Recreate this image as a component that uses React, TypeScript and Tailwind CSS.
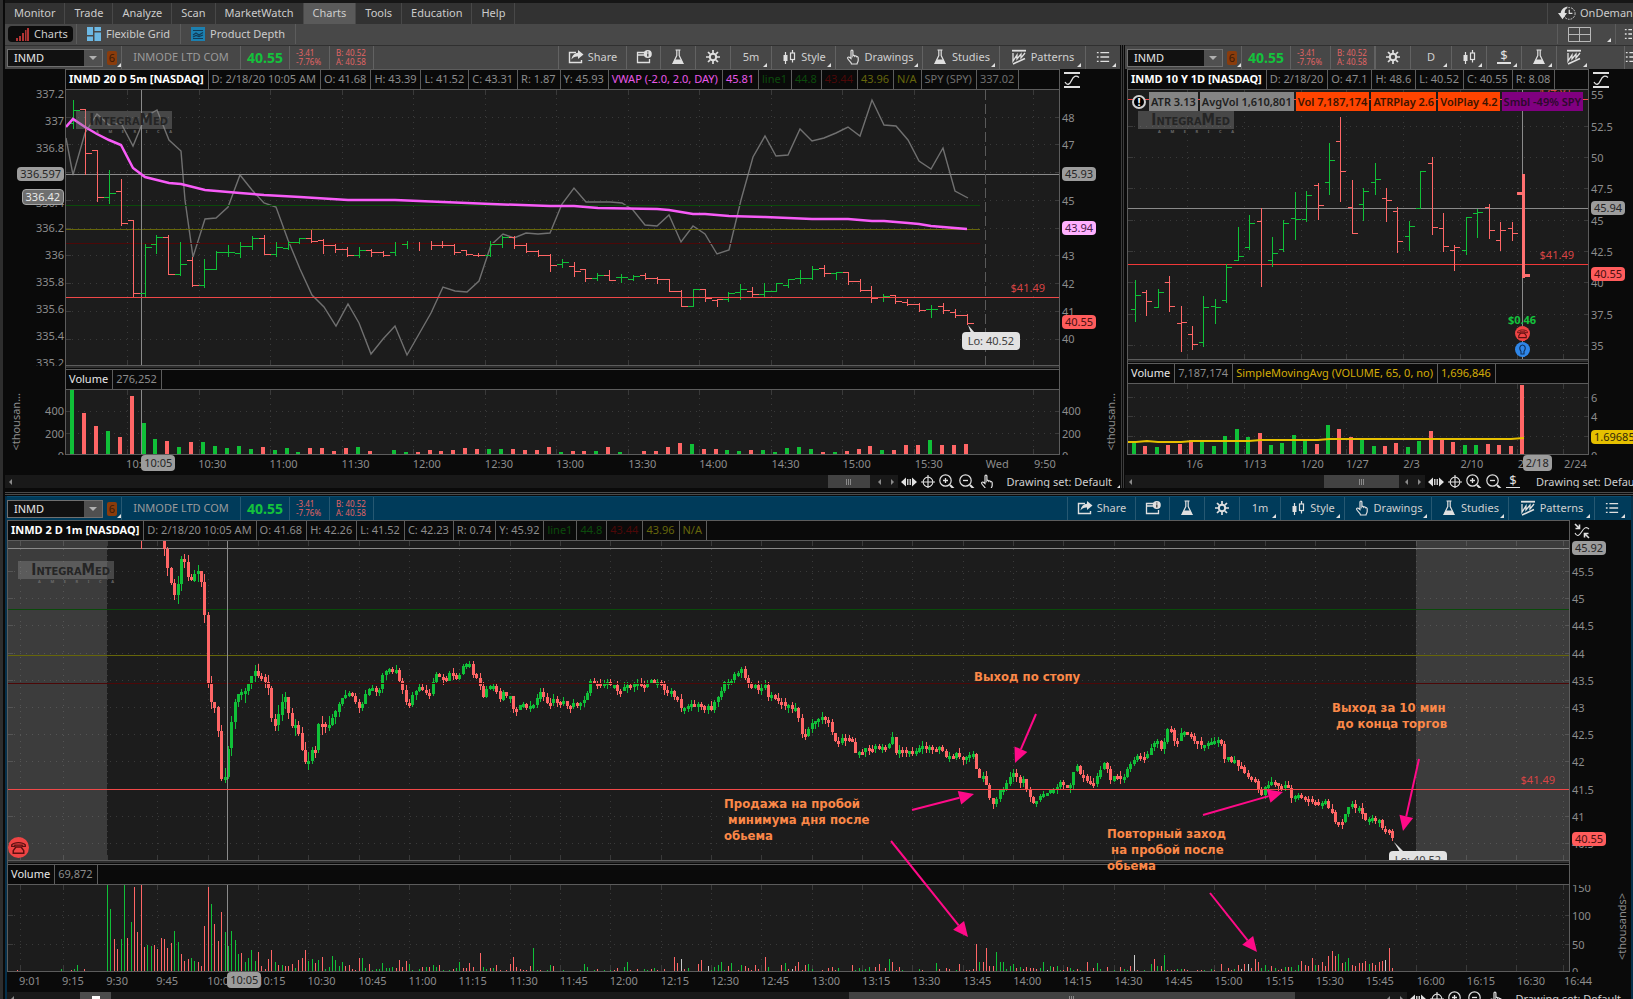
import type { ReactNode } from 'react';
import clsx from 'clsx';

type Tone = 'plain' | 'gray' | 'silver' | 'pink' | 'red' | 'yellow';
type Label = { at: number; text: string; tone?: Tone };
// [direction, high, low, open, close] in plot units; 0 hides the tick
type Bar = ['g' | 'r', number, number, number, number];
type Box = { x: number; y: number; w: number; h: number };

const GREEN = '#10c038';
const RED = '#ff6666';
const COLORS: Record<string, string> = { g: GREEN, r: RED, w: '#c8c8c8' };

/* ---------- data ---------- */

const INTRADAY: Bar[] = [
  ['g', 100, 128, 123, 110], ['r', 109, 174, 109, 153], ['r', 150, 201, 150, 197], ['g', 170, 203, 197, 193],
  ['r', 179, 225, 191, 223], ['r', 220, 297, 220, 293], ['g', 244, 297, 293, 247], ['g', 235, 253, 244, 237],
  ['r', 235, 274, 237, 274], ['g', 242, 275, 274, 264], ['r', 257, 286, 260, 285], ['g', 259, 287, 285, 269],
  ['g', 251, 269, 269, 252], ['g', 245, 256, 252, 252], ['g', 242, 257, 253, 246], ['g', 236, 249, 246, 238],
  ['r', 235, 254, 238, 254], ['g', 242, 256, 254, 247], ['g', 242, 249, 248, 242], ['g', 238, 243, 242, 238],
  ['r', 230, 242, 238, 241], ['r', 239, 253, 240, 245], ['r', 244, 252, 245, 249], ['r', 247, 256, 249, 255],
  ['g', 247, 257, 255, 250], ['r', 249, 256, 250, 252], ['r', 251, 256, 252, 255], ['g', 242, 255, 252, 0],
  ['g', 241, 248, 244, 0], ['r', 242, 250, 0, 0], ['r', 241, 249, 0, 245], ['r', 241, 247, 245, 245],
  ['r', 244, 254, 245, 252], ['r', 250, 255, 250, 254], ['r', 253, 256, 255, 255], ['g', 241, 256, 255, 244],
  ['g', 236, 247, 244, 237], ['r', 236, 248, 237, 245], ['r', 243, 252, 245, 251], ['r', 250, 256, 251, 255],
  ['r', 254, 271, 255, 265], ['g', 259, 267, 264, 262], ['r', 262, 276, 266, 271], ['r', 269, 281, 269, 278],
  ['g', 273, 280, 278, 275], ['r', 270, 280, 275, 280], ['g', 274, 282, 277, 277], ['g', 275, 280, 279, 276],
  ['r', 273, 279, 275, 278], ['r', 277, 283, 278, 279], ['r', 279, 291, 279, 291], ['r', 290, 306, 291, 306],
  ['g', 289, 306, 306, 289], ['r', 289, 301, 289, 298], ['r', 299, 306, 300, 299], ['g', 292, 301, 299, 293],
  ['g', 284, 299, 292, 289], ['r', 287, 297, 291, 294], ['g', 283, 296, 294, 291], ['g', 283, 291, 291, 283],
  ['g', 279, 287, 285, 279], ['g', 270, 283, 278, 278], ['g', 266, 279, 278, 269], ['r', 265, 276, 268, 273],
  ['g', 272, 279, 273, 272], ['r', 272, 284, 272, 281], ['r', 279, 291, 281, 290], ['r', 286, 302, 290, 298],
  ['g', 294, 301, 297, 296], ['r', 295, 303, 295, 301], ['r', 299, 305, 302, 304], ['r', 303, 311, 304, 310],
  ['g', 305, 317, 309, 309], ['r', 303, 313, 306, 310], ['r', 309, 317, 312, 315], ['r', 314, 324, 315, 323],
];

const INTRADAY_VOLUME = [
  64, 41, 28, 23, 17, 58, 31, 15, 13, 7, 12, 12, 8, 6, 8, 5, 7, 4, 6, 2, 6, 6, 3, 6, 7, 3, 0, 4, 2, 2, 4, 3, 4, 6, 5, 5, 5, 5,
  4, 4, 7, 2, 3, 3, 3, 7, 2, 0, 3, 3, 7, 11, 10, 5, 5, 4, 3, 4, 4, 2, 6, 7, 5, 2, 2, 3, 5, 8, 4, 4, 9, 9, 14, 9, 9, 10,
];

const SPY_LINE =
  '66,138 73,175 85,133 97,114 109,125 121,123 133,146 145,117 157,110 169,140 181,151 185,200 193,257 205,219 216,218 228,207 240,175 252,190 264,203 276,207 288,240 300,269 312,295 324,307 336,326 348,304 359,323 371,354 383,339 395,326 407,355 419,334 431,313 443,287 455,291 467,292 479,281 491,245 503,234 514,238 526,233 538,234 550,233 562,204 574,188 586,202 610,202 622,203 633,210 645,225 657,226 669,215 681,242 693,226 705,234 717,254 729,250 741,200 753,157 765,136 776,156 788,155 800,129 812,141 824,138 836,133 848,127 860,136 872,100 884,125 896,126 908,140 919,161 931,169 943,148 955,191 968,198';

const VWAP_LINE =
  '66,127 73,119 85,127 97,134 109,140 121,145 133,168 145,177 157,180 169,183 181,184 205,190 240,193 264,195 300,197 348,200 395,200 443,202 491,204 550,206 574,206 598,208 657,209 669,210 693,214 705,214 729,216 765,217 812,219 848,219 872,221 884,221 908,223 919,224 931,226 943,227 967,229';

const DAILY: Bar[] = [
  ['g', 280, 321, 309, 295], ['r', 290, 315, 292, 301], ['g', 289, 307, 307, 292], ['r', 276, 311, 282, 306],
  ['r', 306, 351, 323, 322], ['r', 326, 349, 334, 344], ['g', 296, 346, 342, 307], ['g', 299, 323, 306, 307],
  ['g', 264, 302, 300, 267], ['g', 227, 260, 260, 256], ['g', 215, 249, 247, 223], ['r', 208, 286, 221, 0],
  ['g', 237, 266, 260, 253], ['g', 220, 251, 249, 223], ['g', 192, 239, 218, 219], ['g', 191, 221, 219, 195],
  ['r', 183, 219, 185, 205], ['g', 143, 194, 182, 160], ['r', 117, 201, 141, 171], ['r', 180, 233, 207, 233],
  ['g', 188, 220, 204, 191], ['g', 163, 194, 182, 179], ['r', 188, 221, 198, 200], ['r', 207, 252, 211, 241],
  ['g', 221, 250, 236, 226], ['g', 171, 208, 208, 171], ['r', 157, 234, 163, 227], ['r', 213, 251, 228, 246],
  ['r', 245, 270, 250, 247], ['g', 217, 254, 250, 217], ['g', 209, 237, 213, 212], ['r', 204, 238, 207, 230],
  ['r', 222, 250, 240, 230], ['r', 222, 240, 228, 233], ['r', 174, 277, 193, 275],
];

const DAILY_VOLUME = [
  13, 8, 7, 9, 10, 14, 14, 8, 18, 25, 17, 21, 9, 11, 19, 13, 10, 29, 25, 17, 14, 8, 8, 11, 7, 13, 23, 14, 12, 9, 9, 10, 9, 8, 69,
];

// closes of the one-minute chart, linearly filled in between
const MINUTE_PATH =
  '160,535 162,541 165,553 168,570 172,590 176,596 179,572 182,550 186,572 189,586 193,577 196,570 199,577 203,591 206,643 209,708 212,697 216,716 219,742 221,781 224,785 226,752 229,742 232,712 236,697 239,690 243,692 246,685 250,683 253,671 256,669 259,676 263,680 266,683 270,697 273,745 276,715 279,717 283,690 286,700 290,724 293,724 296,725 299,738 302,753 306,768 309,762 313,748 316,748 320,713 323,735 326,726 330,723 333,717 337,708 340,702 344,695 350,695 354,702 359,708 363,706 366,690 371,691 379,690 383,675 386,672 396,670 401,690 404,691 407,707 410,702 414,694 420,684 424,691 430,691 434,680 437,675 443,680 449,675 457,679 461,668 464,667 468,660 471,665 475,680 479,680 481,700 484,700 488,686 495,686 498,699 504,691 509,695 513,707 534,707 536,696 541,692 545,701 557,702 561,702 570,705 577,705 585,697 589,684 594,681 611,683 617,694 624,687 628,681 640,686 649,682 663,685 665,693 670,690 677,700 679,707 690,704 704,707 712,707 717,697 723,685 729,684 733,673 739,673 743,670 746,685 754,688 766,686 767,695 774,698 783,705 795,707 799,722 802,733 807,732 810,725 815,723 820,714 824,718 828,723 832,730 835,743 840,740 844,737 851,740 854,752 863,752 872,747 888,747 892,737 894,754 901,750 913,752 919,748 940,747 947,757 954,757 958,754 974,756 977,777 985,780 988,792 995,806 997,795 1004,790 1006,783 1010,775 1015,772 1018,787 1022,777 1027,792 1033,803 1037,798 1047,794 1058,788 1061,780 1068,789 1072,782 1075,763 1079,773 1085,777 1092,784 1096,785 1098,767 1105,766 1110,778 1124,777 1129,763 1133,763 1138,756 1147,755 1151,746 1158,741 1162,752 1165,732 1170,731 1176,742 1182,728 1186,730 1193,740 1202,745 1214,739 1221,742 1223,755 1226,757 1235,761 1240,765 1246,773 1253,780 1258,787 1261,796 1264,787 1270,784 1288,786 1290,799 1302,794 1309,802 1327,804 1331,813 1337,826 1343,818 1348,804 1359,807 1362,815 1368,820 1376,818 1381,823 1384,833 1388,833 1392,840 1394,842';

// minute after the open, direction, bar height
const MINUTE_VOLUME =
  '0g86 1g62 2r32 3r22 4g32 5g86 6r33 7g49 8r84 9r39 10r86 11r24 12g26 13g25 14r26 15r22 16r33 17r32 18r23 19r28 20g40 21g29 22r17 23r10 24r12 25g13 26g10 27r9 28r5 29r45 30r84 31g67 32r47 33r30 34r59 35g39 36g25 37g40 38g31 39g17 40r18 41g9 42g13 43g21 44g10 45r19 46r5 47r2 48r12 49r21 50g9 51r6 52g6 53r5 54r5 55r7 56g3 57r11 58r13 59r21 60g10 61g12 62r8 63g11 64r14 65g2 66g4 67g15 68g11 69g5 70g9 71r5 72r6 73r2 74r1 75r13 76g13 77g3 78r7 79g1 80g2 81g2 82g8 83g3 84g3 85g4 86r3 87r11 88r4 89r10 90g7 91g1 93g2 94r4 95g4 96r4 97g6 98g4 99r6 100g1 102g1 103r2 104g3 105g9 106r3 107r3 108r8 109r4 111r18 112g4 113g2 114r3 115g3 116r6 117r1 119r1 120r7 121r14 122r4 123r2 124r1 125r1 126r5 127g23 128g1 129r1 131g1 132g6 133r5 136g1 141g1 142g7 143g4 145g1 146r2 148g1 150g1 151r1 152r3 154g4 155g9 156r1 158r2 160g2 161g1 162r2 163g3 164r1 166r2 169r14 170r8 171w12 172r2 173g3 176r7 177r11 179w5 180g1 181g4 182g6 183g9 184g1 185r5 186g8 188r1 189g6 190r5 191r3 192r1 193r6 194r2 196r14 197g4 201r6 202g8 203r2 204w2 205r5 206r9 207r1 208r6 209g7 210g2 213r1 215r3 216r4 217r1 218g3 222r6 223g1 224g3 225g1 226g2 227g4 229r4 230r7 232r3 233g12 234r9 235r1 236r4 237g1 242g2 243r1 247g8 248r2 250r3 251r2 253g1 254r7 256r1 257r1 258r2 259r27 260g9 261r9 262r23 263r5 264r5 265g19 266g9 267g9 268g2 269g5 270g7 271r3 272g4 273r2 274r4 275r3 276r3 277r2 278g3 279g9 280w1 281g5 282r4 283g5 284g1 285r1 286r4 287g3 288g1 289r2 290g1 292r9 294r3 295g8 296g2 298r4 300g1 302r4 303g2 304g1 305r5 306w16 307r1 309g1 311g7 312r12 313g5 314r5 315g16 316r1 317r1 318r1 319g2 320g2 321r2 322r1 325r1 326r1 327g1 329g2 330r1 332r7 334r3 335r1 336g2 337r6 338w2 339r7 340w7 341r3 342r12 343r9 344g3 345g6 346g1 347r5 348g3 349r1 350r2 351g4 352r4 353g4 354g1 355g6 356r10 357r6 358r5 359r13 360g6 361r6 362r9 363r5 364r15 365r20 366r15 367g17 368r8 369g9 370g13 371r6 372r5 373r8 374r8 375r10 376g7 377r8 378r6 379r9 380r10 381w11 382r23 383r3';

const MINUTE_OPEN_X = 107.1;
const MINUTE_STEP = 3.355;

const minuteX = (m: number) => Math.round(MINUTE_OPEN_X + MINUTE_STEP * m);

function noise(n: number) {
  const v = Math.sin(n * 12.9898) * 43758.5453;
  return v - Math.floor(v);
}

function buildCandles() {
  const pts = MINUTE_PATH.split(' ').map((p) => p.split(',').map(Number));
  const at = (x: number) => {
    const i = Math.max(1, pts.findIndex((p) => p[0] >= x));
    const [x0, y0] = pts[i - 1];
    const [x1, y1] = pts[i];
    return y0 + ((y1 - y0) * (x - x0)) / (x1 - x0);
  };
  const out: { x: number; top: number; h: number; hi: number; lo: number; color: string }[] = [];
  let prev = 538;
  for (let m = 17; m <= 383; m++) {
    const x = Math.min(1394, MINUTE_OPEN_X + MINUTE_STEP * m);
    const y = at(x) + (noise(m) - 0.5) * 6;
    const h = Math.max(3, Math.round(Math.abs(prev - y)));
    // the morning session swings wider than the rest of the day
    const wick = m < 70 ? 9 : 5;
    out.push({
      x: minuteX(m),
      top: Math.round(Math.min(prev, y)),
      h,
      hi: Math.round(noise(m + 500) * wick),
      lo: Math.round(noise(m + 900) * wick),
      color: y > prev ? RED : GREEN,
    });
    prev = y;
  }
  return out;
}

const CANDLES = buildCandles();

/* ---------- icons ---------- */

const iconProps = { viewBox: '0 0 16 16', fill: 'none', stroke: '#e0e0e0', 'aria-hidden': true } as const;

const ShareIcon = () => (
  <svg {...iconProps} className="w-4 h-4">
    <path d="M8 3.5H1.5v10h12V11" strokeWidth="1.4" />
    <path d="M10 1l5.5 4.5L10 10V7.5C7 7.2 5 8.5 3.5 10.5 4 6.5 6.5 4 10 3.7z" fill="#e0e0e0" stroke="none" />
  </svg>
);
const NewsIcon = () => (
  <svg {...iconProps} className="w-4 h-4">
    <path d="M9 3.5H1.5v10h12V10M1.5 6H9" strokeWidth="1.3" />
    <circle cx="11.8" cy="5" r="4" fill="#e0e0e0" stroke="none" />
    <path d="M11.8 4.5V7.5M11.8 2.5V3.6" stroke="#444" strokeWidth="1.4" />
  </svg>
);
const FlaskIcon = () => (
  <svg {...iconProps} className="w-4 h-4">
    <path d="M5.5 1h5M6.8 1v5.5L3 14.5h10L9.2 6.5V1" strokeWidth="1.2" />
    <path d="M4.8 10.5h6.4l2.3 4.5h-11z" fill="#e0e0e0" stroke="none" />
  </svg>
);
const GearIcon = () => (
  <svg {...iconProps} className="w-4 h-4">
    <circle cx="8" cy="8" r="3.2" strokeWidth="2" />
    <path d="M8 1v3M8 12v3M1 8h3M12 8h3M3 3l2.2 2.2M10.8 10.8L13 13M3 13l2.2-2.2M10.8 5.2L13 3" strokeWidth="1.7" />
  </svg>
);
const CandlesIcon = () => (
  <svg {...iconProps} className="w-4 h-4">
    <path d="M4.5 3v12M11.5 1v3M11.5 10.5v3" strokeWidth="1.2" />
    <rect x="2.5" y="6" width="4" height="6" fill="#e0e0e0" stroke="none" />
    <rect x="9.5" y="4" width="4" height="6.5" strokeWidth="1.2" />
  </svg>
);
const HandIcon = () => (
  <svg {...iconProps} className="w-4 h-4">
    <path
      d="M6 9.5V2c0-1.3 1.9-1.3 1.9 0v4.8c.5-.8 1.7-.5 1.8.4.6-.6 1.6-.3 1.8.5.7-.4 1.7 0 1.7 1v2.5c0 1.8-1.2 2.5-1.2 3.8H6.5C6.5 13 3 11.5 2.5 9c.2-1.3 1.8-1.2 2.3-.4z"
      strokeWidth="1.2"
    />
  </svg>
);
const PatternIcon = () => (
  <svg {...iconProps} className="w-4 h-4">
    <path d="M1 1.7h14" strokeWidth="1.8" />
    <path d="M2 4v8l4-6v4l4-5v4l4-5" strokeWidth="1.3" />
    <path d="M2 15L14 9.5" strokeWidth="1.6" />
  </svg>
);
const ListIcon = () => (
  <svg {...iconProps} className="w-3.5 h-3.5">
    <path d="M1 3h2M1 8h2M1 13h2M5 3h10M5 8h10M5 13h10" strokeWidth="1.5" />
  </svg>
);
const DollarIcon = () => (
  <span className="flex flex-col items-center w-3.5 border-b-2 border-[#e0e0e0] text-[13px] leading-[13px] text-[#e0e0e0]">$</span>
);
const CurveIcon = () => (
  <svg {...iconProps} className="w-4 h-4">
    <path d="M0 1h16M0 15h16" strokeWidth="1.8" />
    <path d="M1 10c2 3.5 4.5 3 6.5-1.5S12 3 15 5.5" strokeWidth="1.3" />
  </svg>
);
const CurveArrowsIcon = () => (
  <svg {...iconProps} className="w-4 h-4">
    <path d="M1 10c2 4 4 3 6.5-1S12 3 15 6" strokeWidth="1.1" />
    <path d="M1 1l4 4M5.5 1.5V5.5H1.5M15 15l-4-4M10.5 14.5V10.5H14.5" strokeWidth="1.6" />
  </svg>
);
const PanIcon = () => (
  <svg {...iconProps} className="w-4 h-4">
    <path d="M5 3.5v9L0 8zM11 3.5v9L16 8z" fill="#e0e0e0" stroke="none" />
    <path d="M6.5 5v6M8 5v6M9.5 5v6" strokeWidth=".9" />
  </svg>
);
const CrossIcon = () => (
  <svg {...iconProps} className="w-3.5 h-3.5">
    <circle cx="8" cy="8" r="5.5" strokeWidth="1.3" />
    <path d="M8 0v16M0 8h16" strokeWidth="1.3" />
  </svg>
);
const ZoomIcon = ({ plus }: { plus?: boolean }) => (
  <svg {...iconProps} className="w-4 h-4">
    <circle cx="6.5" cy="6.5" r="5.7" strokeWidth="1.2" />
    <path d="M11 11l4.5 4.5" strokeWidth="2" />
    <path d={plus ? 'M4 6.5h5M6.5 4v5' : 'M4 6.5h5'} strokeWidth="1.3" />
  </svg>
);
const PhoneIcon = ({ size }: { size: number }) => (
  <svg viewBox="0 0 20 20" width={size} height={size} aria-hidden>
    <circle cx="10" cy="10" r="10" fill="#ee4444" />
    <path d="M3.5 9V7.5C6 4.5 14 4.5 16.5 7.5V9h-3V7.8h-7V9z" fill="none" stroke="#5a1010" strokeWidth="1.2" />
    <path d="M7.5 9.5h5l2.5 3.5v2.5H5V13z" fill="none" stroke="#5a1010" strokeWidth="1.4" />
  </svg>
);
const BulbIcon = () => (
  <svg viewBox="0 0 20 20" width="15" height="15" aria-hidden>
    <circle cx="10" cy="10" r="10" fill="#2f86e8" />
    <path d="M8 12.5C5 9 6.5 4 10 4s5 5 2 8.5v3.5H8z" fill="none" stroke="#10305a" strokeWidth="1.5" />
  </svg>
);

/* ---------- toolbar ---------- */

const Corner = () => (
  <span className="absolute right-1 bottom-0.5 border-4 border-t-0 border-r-0 border-transparent border-b-[#e0e0e0]" />
);

function Tool({ label, title, width, corner, children }: { label?: string; title?: string; width: string; corner?: boolean; children?: ReactNode }) {
  return (
    <button
      type="button"
      aria-label={label ?? title}
      className={clsx('relative flex items-center justify-center gap-1 shrink-0 h-full border-l border-white/15 pb-0.5 text-[#d0d0d0]', width)}
    >
      {children}
      {label}
      {corner && <Corner />}
    </button>
  );
}

function SymbolBox({ id, name }: { id: string; name?: string }) {
  return (
    <>
      <div className="flex h-[18px] w-24 shrink-0 border border-[#707070] bg-[#111]">
        <label htmlFor={id} className="sr-only">Symbol</label>
        <input id={id} defaultValue="INMD" className="w-full min-w-0 bg-transparent px-1.5 text-[#e8e8e8] outline-none" />
        <button type="button" aria-label="Symbol list" className="flex w-[18px] shrink-0 items-center justify-center bg-[#505050]">
          <span className="border-x-4 border-t-4 border-x-transparent border-t-[#b0b0b0]" />
        </button>
      </div>
      <div className="relative flex h-full w-[18px] shrink-0 items-center justify-center">
        <span className="flex h-3.5 w-2.5 items-center justify-center rounded-[2px] bg-[#8a3c0c] text-[#3c1a06]">6</span>
        <span className="absolute right-0 bottom-0.5 border-4 border-transparent border-r-0 border-b-[#e0e0e0] border-t-0" />
      </div>
      {name && <span className="flex h-full w-[119px] shrink-0 items-center justify-center border-l border-white/15 pb-0.5 text-[#9a9a9a]">{name}</span>}
      <span className="flex h-full w-[49px] shrink-0 items-center justify-center border-l border-white/15 text-sm font-bold text-[#14c23c]">40.55</span>
      <span className="flex h-full w-10 shrink-0 flex-col justify-center border-l border-white/15 pb-0.5 pl-1.5 text-[8px] leading-[9px] text-[#e06464]">
        <span>-3.41</span>
        <span>-7.76%</span>
      </span>
      <span className="flex h-full w-[45px] shrink-0 flex-col justify-center border-x border-white/15 pb-0.5 pl-1.5 text-[8px] leading-[9px] text-[#e06464]">
        <span>B: 40.52</span>
        <span>A: 40.58</span>
      </span>
    </>
  );
}

function Toolbar({ id, period, active }: { id: string; period: string; active?: boolean }) {
  return (
    <div className={clsx('flex h-6 items-center overflow-hidden border-t', active ? 'border-[#0a4a6c] bg-[#003b5a] pr-[2px]' : 'border-[#303030] bg-[#474747] pl-[2px]')}>
      <SymbolBox id={id} name="INMODE LTD COM" />
      <div className="ml-auto flex h-full">
        <Tool label="Share" width="w-[68px]"><ShareIcon /></Tool>
        <Tool title="News" width="w-[34px]"><NewsIcon /></Tool>
        <Tool title="Edit studies" width="w-[35px]"><FlaskIcon /></Tool>
        <Tool title="Settings" width="w-[35px]"><GearIcon /></Tool>
        <Tool label={period} width="w-[41px]" corner />
        <Tool label="Style" width="w-[64px]" corner><CandlesIcon /></Tool>
        <Tool label="Drawings" width="w-[87px]" corner><HandIcon /></Tool>
        <Tool label="Studies" width="w-[77px]" corner><FlaskIcon /></Tool>
        <Tool label="Patterns" width="w-[86px]" corner><PatternIcon /></Tool>
        <Tool title="Menu" width="w-[35px]" corner><ListIcon /></Tool>
      </div>
    </div>
  );
}

/* ---------- chart parts ---------- */

type Chip = [string, string];

function StatusRow({ items }: { items: Chip[] }) {
  return (
    <div className="flex h-[21px] items-stretch overflow-hidden border-y border-[#5c5c5c] bg-[#0a0a0a]">
      {items.map(([text, tone], i) => (
        <span key={i} className={clsx('flex shrink-0 items-center border-r border-[#5c5c5c] pr-1 pb-0.5 pl-[3px] whitespace-nowrap', tone)}>
          {text}
        </span>
      ))}
    </div>
  );
}

const BADGES: Record<Tone, string> = {
  plain: 'text-[#8c8c8c]',
  gray: 'rounded bg-[#9c9c9c] px-[3px] text-[#262626]',
  silver: 'rounded border border-[#a8a8a8] bg-[#6e6e6e] px-[3px] text-[#e8e8e8]',
  pink: 'rounded bg-[#ffb0ff] px-[3px] text-[#4a204a]',
  red: 'rounded bg-[#ff5c5c] px-[3px] text-[#4a1010]',
  yellow: 'rounded bg-[#e6c000] px-[3px] text-[#33290a]',
};

// price scale beside a plot; `at` shares the plot's vertical units
function Scale({ labels, from, side, className }: { labels: Label[]; from: number; side: 'left' | 'right'; className: string }) {
  return (
    <div className={clsx('relative overflow-hidden', className)}>
      {labels.map((l) => (
        <span
          key={l.text}
          style={{ top: l.at - from - 7 }}
          className={clsx('absolute leading-[14px]', side === 'left' ? 'right-px' : 'left-0.5', BADGES[l.tone ?? 'plain'])}
        >
          {l.text}
        </span>
      ))}
    </div>
  );
}

function TimeAxis({ labels, box, hover }: { labels: Label[]; box: Box; hover: Label }) {
  const left = (x: number) => `${((x - box.x) / box.w) * 100}%`;
  return (
    <div className="relative h-5 text-[#8c8c8c]">
      {labels.map((l) => (
        <span key={l.text} style={{ left: left(l.at) }} className="absolute top-0.5 leading-[14px] whitespace-nowrap">
          {l.text}
        </span>
      ))}
      <span style={{ left: left(hover.at) }} className="absolute top-0 rounded bg-[#9c9c9c] px-[3px] leading-4 text-[#262626]">
        {hover.text}
      </span>
    </div>
  );
}

function Plot({ box, rows, cols, className, children, overlay }: { box: Box; rows: number[]; cols: number[]; className: string; children: ReactNode; overlay?: ReactNode }) {
  const bottom = box.y + box.h;
  const right = box.x + box.w;
  return (
    <div className={clsx('relative overflow-hidden border-b border-[#5c5c5c] bg-[#1c1c1c]', className)}>
      <svg
        viewBox={`${box.x} ${box.y} ${box.w} ${box.h}`}
        preserveAspectRatio="none"
        className="block h-full w-full"
        aria-hidden
      >
        <g stroke="#3a3a3a" shapeRendering="crispEdges">
          {rows.map((y) => (
            <g key={y}>
              <path d={`M${box.x} ${y + 0.5}H${right}`} strokeDasharray="1 5" />
              <path d={`M${box.x} ${y + 0.5}h5M${right} ${y + 0.5}h-4`} />
            </g>
          ))}
          {cols.map((x) => (
            <g key={x}>
              <path d={`M${x + 0.5} ${box.y + 8}V${bottom}`} strokeDasharray="1 5" />
              <path d={`M${x + 0.5} ${box.y}v5M${x + 0.5} ${bottom}v-5`} />
            </g>
          ))}
        </g>
        {children}
      </svg>
      {overlay}
    </div>
  );
}

const HLine = ({ y, color, from, to }: { y: number; color: string; from: number; to: number }) => (
  <path d={`M${from} ${y + 0.5}H${to}`} stroke={color} shapeRendering="crispEdges" />
);
const VLine = ({ x, from, to }: { x: number; from: number; to: number }) => (
  <path d={`M${x + 0.5} ${from}V${to}`} stroke="#8a8a8a" shapeRendering="crispEdges" />
);

function OhlcBars({ bars, start, step, tick }: { bars: Bar[]; start: number; step: number; tick: number }) {
  return (
    <g shapeRendering="crispEdges" fill="none">
      {bars.map(([dir, hi, lo, open, close], i) => {
        const x = Math.round(start + step * i) + 0.5;
        const d = `M${x} ${hi}V${lo + 1}${open ? `M${x - tick} ${open + 0.5}H${x}` : ''}${close ? `M${x} ${close + 0.5}H${x + tick}` : ''}`;
        return <path key={i} d={d} stroke={COLORS[dir]} />;
      })}
    </g>
  );
}

function VolumeBars({ bars, heights, start, step, base }: { bars: Bar[]; heights: number[]; start: number; step: number; base: number }) {
  return (
    <g shapeRendering="crispEdges">
      {heights.map((h, i) => (
        <rect key={i} x={Math.round(start + step * i) - 2} y={base - h} width="4" height={h} fill={COLORS[bars[i][0]]} />
      ))}
    </g>
  );
}

// faint company watermark in the corner of each price plot
const Watermark = ({ className }: { className: string }) => (
  <div className={clsx('absolute', className)}>
    <div className="flex h-[18px] w-24 items-center justify-end bg-[#8a8a8a]/40 pr-1 font-['Liberation_Sans_Narrow','DejaVu_Sans_Condensed',sans-serif] text-[15px] leading-[18px] font-bold text-[#252525] [font-variant:small-caps]">
      IntegraMed
    </div>
    <div className="flex justify-between pl-5 text-[4px] leading-[6px] font-bold text-[#6a6a6a]">
      {'AMERICA'.split('').map((c, i) => <span key={i}>{c}</span>)}
    </div>
  </div>
);

const LowBubble = ({ className }: { className: string }) => (
  <span className={clsx('absolute rounded bg-[#e2e2e2] px-1.5 leading-[18px] whitespace-nowrap text-[#404040]', className)}>Lo: 40.52</span>
);

const Units = ({ className, text }: { className: string; text: string }) => (
  <span className={clsx('absolute rotate-180 whitespace-nowrap text-[#8c8c8c] [writing-mode:vertical-rl]', className)}>{text}</span>
);

function ScrollRow({ grow, thumb, rest, gap, money, end }: { grow: string; thumb: string; rest: string; gap?: ReactNode; money?: boolean; end?: string }) {
  return (
    <div className={clsx('flex h-[13px] items-center', end)}>
      <div className={clsx('flex h-[13px] items-center bg-[#191919]', grow)}>
        <span className="ml-1 border-[3px] border-l-0 border-transparent border-r-[#8a8a8a]" />
        {gap}
      </div>
      <div className={clsx('flex h-[13px] shrink-0 items-center justify-center gap-px bg-[#424242]', thumb)}>
        <span className="h-1.5 w-px bg-[#8a8a8a]" />
        <span className="h-1.5 w-px bg-[#8a8a8a]" />
        <span className="h-1.5 w-px bg-[#8a8a8a]" />
      </div>
      <div className={clsx('flex h-[13px] shrink-0 items-center justify-end gap-2.5 bg-[#191919] pr-1', rest)}>
        <span className="border-[3px] border-l-0 border-transparent border-r-[#8a8a8a]" />
        <span className="border-[3px] border-r-0 border-transparent border-l-[#8a8a8a]" />
      </div>
      <div className="flex shrink-0 items-center gap-1 pl-[3px]">
        <button type="button" aria-label="Pan"><PanIcon /></button>
        <button type="button" aria-label="Crosshair"><CrossIcon /></button>
        <button type="button" aria-label="Zoom in"><ZoomIcon plus /></button>
        <button type="button" aria-label="Zoom out"><ZoomIcon /></button>
        <button type="button" aria-label="Drawing tool">{money ? <DollarIcon /> : <HandIcon />}</button>
      </div>
      <button type="button" className={clsx('relative shrink-0 pr-2 whitespace-nowrap text-[#d0d0d0]', money ? 'ml-4' : 'ml-3')}>
        Drawing set: Default
        <span className="absolute right-0 bottom-0 border-4 border-r-0 border-t-0 border-transparent border-b-[#e0e0e0]" />
      </button>
    </div>
  );
}

const GRAY = 'text-[#8c8c8c]';
const TITLE = 'font-bold text-white';
const MAGENTA = 'text-[#e858e8]';
const LEVELS: Chip[] = [
  ['line1', 'text-[#0c4a0c]'],
  ['44.8', 'text-[#0c4a0c]'],
  ['43.44', 'text-[#4c0808]'],
  ['43.96', 'text-[#66660c]'],
  ['N/A', 'text-[#66660c]'],
];

/* ---------- 5 minute chart ---------- */

const P1: Box = { x: 66, y: 90, w: 993, h: 275 };
const V1: Box = { x: 66, y: 390, w: 993, h: 64 };
const P1_COLS = [127, 199, 270, 342, 413, 485, 556, 628, 699, 771, 842, 914, 1033];

function IntradayPanel() {
  return (
    <section className="min-w-0 overflow-hidden bg-[#0a0a0a]">
      <Toolbar id="symbol-5m" period="5m" />
      <div className="flex">
        <div className="relative w-[60px] shrink-0 pt-[21px]">
          <Scale
            side="left"
            from={90}
            className="h-[276px]"
            labels={[
              { at: 94, text: '337.2' },
              { at: 121, text: '337' },
              { at: 148, text: '336.8' },
              { at: 203, text: '336.4' },
              { at: 174, text: '336.597', tone: 'gray' },
              { at: 196, text: '336.42', tone: 'silver' },
              { at: 228, text: '336.2' },
              { at: 255, text: '336' },
              { at: 282, text: '335.8' },
              { at: 309, text: '335.6' },
              { at: 336, text: '335.4' },
              { at: 363, text: '335.2' },
            ]}
          />
          <Scale side="left" from={390} className="mt-6 h-[65px]" labels={[{ at: 411, text: '400' }, { at: 434, text: '200' }, { at: 456, text: '0' }]} />
          <Units className="bottom-6 left-1" text="<thousan..." />
        </div>
        <div className="min-w-0 flex-1">
          <div className="border-x border-[#5c5c5c]">
            <StatusRow
              items={[
                ['INMD 20 D 5m [NASDAQ]', TITLE],
                ['D: 2/18/20 10:05 AM', GRAY],
                ['O: 41.68', GRAY],
                ['H: 43.39', GRAY],
                ['L: 41.52', GRAY],
                ['C: 43.31', GRAY],
                ['R: 1.87', GRAY],
                ['Y: 45.93', GRAY],
                ['VWAP (-2.0, 2.0, DAY)', MAGENTA],
                ['45.81', MAGENTA],
                ...LEVELS,
                ['SPY (SPY)', 'text-[#707070]'],
                ['337.02', 'text-[#707070]'],
              ]}
            />
            <Plot
              box={P1}
              className="h-[276px]"
              rows={[117, 144, 172, 200, 228, 255, 283, 311, 339]}
              cols={P1_COLS}
              overlay={
                <>
                  <Watermark className="top-[21px] left-2.5" />
                  <span className="absolute top-[191px] right-3.5 leading-[14px] text-[#d84444]">$41.49</span>
                  <LowBubble className="top-[242px] right-[39px]" />
                </>
              }
            >
              <polyline points={SPY_LINE} fill="none" stroke="#707070" strokeWidth="1.4" />
              <HLine y={205} color="#0a4a0a" from={66} to={980} />
              <HLine y={229} color="#66660a" from={66} to={980} />
              <HLine y={243} color="#4c0808" from={66} to={980} />
              <HLine y={174} color="#8a8a8a" from={66} to={1059} />
              <VLine x={141} from={90} to={365} />
              <path d="M985.5 90V365" stroke="#5a5a5a" strokeDasharray="10 4" shapeRendering="crispEdges" />
              <OhlcBars bars={INTRADAY} start={73} step={11.917} tick={6} />
              <HLine y={297} color="#f04848" from={66} to={1059} />
              <polyline points={VWAP_LINE} fill="none" stroke="#f85cf8" strokeWidth="2.5" />
              <path d="M968 325l3 8h4z" fill="#e2e2e2" />
            </Plot>
            <div className="h-[3px] border-b border-[#0a0a0a] bg-[#2c2c2c]" />
            <StatusRow items={[['Volume', 'text-[#e8e8e8]'], ['276,252', GRAY]]} />
            <Plot box={V1} className="h-[65px]" rows={[411, 433]} cols={P1_COLS}>
              <VLine x={141} from={390} to={454} />
              <VolumeBars bars={INTRADAY} heights={INTRADAY_VOLUME} start={72} step={11.917} base={454} />
            </Plot>
          </div>
          <TimeAxis
            box={V1}
            hover={{ at: 142, text: '10:05' }}
            labels={[
              { at: 127, text: '10:' },
              { at: 199, text: '10:30' },
              { at: 270, text: '11:00' },
              { at: 342, text: '11:30' },
              { at: 413, text: '12:00' },
              { at: 485, text: '12:30' },
              { at: 556, text: '13:00' },
              { at: 628, text: '13:30' },
              { at: 699, text: '14:00' },
              { at: 771, text: '14:30' },
              { at: 842, text: '15:00' },
              { at: 914, text: '15:30' },
              { at: 985, text: 'Wed' },
              { at: 1033, text: '9:50' },
            ]}
          />
        </div>
        <div className="relative w-[60px] shrink-0">
          <div className="flex h-[21px] items-center pl-1"><CurveIcon /></div>
          <Scale
            side="right"
            from={90}
            className="h-[276px]"
            labels={[
              { at: 118, text: '48' },
              { at: 145, text: '47' },
              { at: 174, text: '45.93', tone: 'gray' },
              { at: 201, text: '45' },
              { at: 228, text: '43.94', tone: 'pink' },
              { at: 256, text: '43' },
              { at: 284, text: '42' },
              { at: 312, text: '41' },
              { at: 322, text: '40.55', tone: 'red' },
              { at: 339, text: '40' },
            ]}
          />
          <Scale side="right" from={390} className="mt-6 h-[65px]" labels={[{ at: 411, text: '400' }, { at: 434, text: '200' }, { at: 456, text: '0' }]} />
          <Units className="right-0.5 bottom-6" text="<thousan..." />
        </div>
      </div>
      <ScrollRow grow="flex-1" thumb="w-[42px]" rest="w-7" />
    </section>
  );
}

/* ---------- daily chart ---------- */

const P2: Box = { x: 1128, y: 90, w: 460, h: 269 };
const V2: Box = { x: 1128, y: 384, w: 460, h: 70 };
const P2_COLS = [1187, 1244, 1301, 1346, 1403, 1460, 1517, 1563];

const METRICS: Chip[] = [
  ['ATR 3.13', 'bg-[#848484] text-[#202020]'],
  ['AvgVol 1,610,801', 'bg-[#848484] text-[#202020]'],
  ['Vol 7,187,174', 'bg-[#ff4400] text-[#3c1400]'],
  ['ATRPlay 2.6', 'bg-[#ff4400] text-[#3c1400]'],
  ['VolPlay 4.2', 'bg-[#ff4400] text-[#3c1400]'],
  ['Smbl -49% SPY', 'bg-[#800080] text-[#2c0a2c]'],
];

function DailyPanel() {
  return (
    <section className="min-w-0 overflow-hidden bg-[#0a0a0a]">
      <div className="flex h-6 items-center overflow-hidden border-t border-[#303030] bg-[#474747] pl-[2px]">
        <SymbolBox id="symbol-daily" />
        <div className="flex h-full flex-1">
          <Tool title="Settings" width="w-[35px]"><GearIcon /></Tool>
          <Tool label="D" width="w-[41px]" corner />
          <Tool title="Style" width="w-[35px]" corner><CandlesIcon /></Tool>
          <Tool title="Drawings" width="w-[35px]" corner><DollarIcon /></Tool>
          <Tool title="Studies" width="w-[35px]" corner><FlaskIcon /></Tool>
          <Tool title="Patterns" width="w-[35px]" corner><PatternIcon /></Tool>
          <Tool title="Menu" width="ml-auto w-[9px]"><span className="w-2 overflow-hidden"><ListIcon /></span></Tool>
        </div>
      </div>
      <div className="flex">
        <div className="ml-[2px] min-w-0 flex-1">
          <div className="border-x border-[#5c5c5c]">
            <StatusRow
              items={[
                ['INMD 10 Y 1D [NASDAQ]', TITLE],
                ['D: 2/18/20', GRAY],
                ['O: 47.1', GRAY],
                ['H: 48.6', GRAY],
                ['L: 40.52', GRAY],
                ['C: 40.55', GRAY],
                ['R: 8.08', GRAY],
              ]}
            />
            <Plot
              box={P2}
              className="h-[270px]"
              rows={[126, 157, 188, 220, 251, 282, 314, 345]}
              cols={P2_COLS}
              overlay={
                <>
                  <Watermark className="top-[21px] left-2.5" />
                  <span className="absolute -top-2 right-4 leading-[14px] text-[#d84444]">$54.01</span>
                  <div className="absolute top-0.5 left-1 flex items-center gap-0.5">
                    <span className="mr-px flex size-[14px] items-center justify-center rounded-full border-2 border-[#d0d0d0] bg-black leading-none font-bold text-white">!</span>
                    {METRICS.map(([text, tone]) => (
                      <span key={text} className={clsx('px-0.5 leading-[19px] font-semibold whitespace-nowrap', tone)}>{text}</span>
                    ))}
                  </div>
                  <span className="absolute top-[158px] right-3.5 leading-[14px] text-[#d84444]">$41.49</span>
                  <div className="absolute top-[224px] right-[52px] flex w-7 flex-col items-center">
                    <span className="leading-3 font-bold text-[#14c23c]">$0.46</span>
                    <PhoneIcon size={15} />
                    <span className="mt-px"><BulbIcon /></span>
                  </div>
                </>
              }
            >
              <HLine y={99} color="#f04848" from={1128} to={1588} />
              <HLine y={208} color="#8a8a8a" from={1128} to={1588} />
              <HLine y={264} color="#f03838" from={1128} to={1588} />
              <OhlcBars bars={DAILY} start={1135} step={11.41} tick={5} />
              <VLine x={1522} from={90} to={359} />
              <path d="M1522 174h3v104h-3zM1517 192h5v3h-5zM1525 274h5v3h-5z" fill="#ff7070" shapeRendering="crispEdges" />
            </Plot>
            <div className="h-[3px] border-b border-[#0a0a0a] bg-[#2c2c2c]" />
            <StatusRow
              items={[
                ['Volume', 'text-[#e8e8e8]'],
                ['7,187,174', GRAY],
                ['SimpleMovingAvg (VOLUME, 65, 0, no)', 'text-[#d4ac08]'],
                ['1,696,846', 'text-[#d4ac08]'],
              ]}
            />
            <Plot box={V2} className="h-[71px]" rows={[397, 416, 436]} cols={P2_COLS}>
              <VolumeBars bars={DAILY} heights={DAILY_VOLUME} start={1134} step={11.41} base={454} />
              <polyline
                points="1128,442 1136,442 1147,441 1158,442 1181,442 1193,441 1249,441 1261,440 1318,440 1329,439 1511,439 1524,438"
                fill="none"
                stroke="#e6c000"
                strokeWidth="2"
              />
            </Plot>
          </div>
          <TimeAxis
            box={V2}
            hover={{ at: 1522, text: '2/18' }}
            labels={[
              { at: 1187, text: '1/6' },
              { at: 1244, text: '1/13' },
              { at: 1301, text: '1/20' },
              { at: 1346, text: '1/27' },
              { at: 1403, text: '2/3' },
              { at: 1460, text: '2/10' },
              { at: 1517, text: '2' },
              { at: 1563, text: '2/24' },
            ]}
          />
        </div>
        <div className="w-11 shrink-0">
          <div className="flex h-[21px] items-center pl-1"><CurveIcon /></div>
          <Scale
            side="right"
            from={90}
            className="h-[270px]"
            labels={[
              { at: 95, text: '55' },
              { at: 127, text: '52.5' },
              { at: 158, text: '50' },
              { at: 189, text: '47.5' },
              { at: 208, text: '45.94', tone: 'gray' },
              { at: 221, text: '45' },
              { at: 252, text: '42.5' },
              { at: 283, text: '40' },
              { at: 274, text: '40.55', tone: 'red' },
              { at: 315, text: '37.5' },
              { at: 346, text: '35' },
            ]}
          />
          <Scale
            side="right"
            from={384}
            className="mt-6 h-[71px]"
            labels={[{ at: 398, text: '6' }, { at: 417, text: '4' }, { at: 437, text: '1.69685', tone: 'yellow' }, { at: 456, text: '0' }]}
          />
        </div>
      </div>
      <ScrollRow grow="w-[199px] shrink-0" thumb="w-[75px]" rest="w-[26px]" money />
    </section>
  );
}

/* ---------- 1 minute chart ---------- */

const P3: Box = { x: 8, y: 541, w: 1561, h: 319 };
const V3: Box = { x: 8, y: 885, w: 1561, h: 86 };
const P3_TIMES: Label[] = [
  '9:01', '9:15', '9:30', '9:45', '10:00', '10:15', '10:30', '10:45', '11:00', '11:15', '11:30', '11:45', '12:00', '12:15',
  '12:30', '12:45', '13:00', '13:15', '13:30', '13:45', '14:00', '14:15', '14:30', '14:45', '15:00', '15:15', '15:30', '15:45',
  '16:00', '16:15', '16:30', '16:44',
].map((text, i) => ({ text, at: i === 0 ? 20 : i === 1 ? 63 : i === 31 ? 1563 : Math.round(MINUTE_OPEN_X + 50.33 * (i - 2)) }));
const P3_COLS = P3_TIMES.map((t) => t.at);

// tail x, tail y, tip x, tip y
const ARROWS = [
  [1036, 714, 1015, 763],
  [912, 810, 974, 794],
  [891, 841, 968, 937],
  [1203, 815, 1283, 792],
  [1419, 759, 1403, 831],
  [1210, 893, 1257, 952],
];

const NOTES = [
  { x: 974, y: 677, lines: ['Выход по стопу'] },
  { x: 1332, y: 708, lines: ['Выход за 10 мин', ' до конца торгов'] },
  { x: 724, y: 804, lines: ['Продажа на пробой', ' минимума дня после', 'обьема'] },
  { x: 1107, y: 834, lines: ['Повторный заход', ' на пробой после', 'обьема'] },
];

function Arrow({ points: [x0, y0, x1, y1] }: { points: number[] }) {
  const a = Math.atan2(y1 - y0, x1 - x0);
  const bx = x1 - 15 * Math.cos(a);
  const by = y1 - 15 * Math.sin(a);
  const dx = 7 * Math.sin(a);
  const dy = 7 * Math.cos(a);
  return (
    <g>
      <path d={`M${x0} ${y0}L${bx} ${by}`} stroke="#ff0a88" strokeWidth="2" />
      <path d={`M${x1} ${y1}L${bx + dx} ${by - dy}L${bx - dx} ${by + dy}z`} fill="#ff0a88" />
    </g>
  );
}

function MinutePanel() {
  return (
    <section className="overflow-hidden border-x-2 border-[#06304a] bg-[#0a0a0a]">
      <Toolbar id="symbol-1m" period="1m" active />
      <div className="flex">
        <div className="relative min-w-0 flex-1">
          <div className="border-x border-[#5c5c5c]">
            <StatusRow
              items={[
                ['INMD 2 D 1m [NASDAQ]', TITLE],
                ['D: 2/18/20 10:05 AM', GRAY],
                ['O: 41.68', GRAY],
                ['H: 42.26', GRAY],
                ['L: 41.52', GRAY],
                ['C: 42.23', GRAY],
                ['R: 0.74', GRAY],
                ['Y: 45.92', GRAY],
                ...LEVELS,
              ]}
            />
            <Plot
              box={P3}
              className="h-80"
              rows={[571, 598, 625, 653, 680, 707, 734, 761, 816, 843]}
              cols={P3_COLS}
              overlay={
                <>
                  <Watermark className="top-5 left-2.5" />
                  <span className="absolute top-[232px] right-3.5 leading-[14px] text-[#d84444]">$41.49</span>
                  <LowBubble className="top-[310px] right-[122px]" />
                  <span className="absolute bottom-[2px] left-0"><PhoneIcon size={21} /></span>
                </>
              }
            >
              <path d="M8 541H107V860H8zM1416 541H1569V860H1416z" fill="#fff" fillOpacity=".14" />
              <HLine y={609} color="#0a4a0a" from={8} to={1569} />
              <HLine y={655} color="#66660a" from={8} to={1569} />
              <HLine y={548} color="#8a8a8a" from={8} to={1569} />
              <g shapeRendering="crispEdges">
                <rect x="141" y="541" width="1" height="8" fill={RED} />
                {CANDLES.map((c) => (
                  <g key={c.x} fill={c.color}>
                    <rect x={c.x} y={c.top - c.hi} width="1" height={c.h + c.hi + c.lo} />
                    <rect x={c.x - 1} y={c.top} width="3" height={c.h} />
                  </g>
                ))}
              </g>
              <HLine y={683} color="#4c0808" from={8} to={1569} />
              <VLine x={227} from={541} to={860} />
              <HLine y={789} color="#f04848" from={8} to={1569} />
              <path d="M1394 842l6 10h4z" fill="#e2e2e2" />
            </Plot>
            <div className="h-[3px] border-b border-[#0a0a0a] bg-[#2c2c2c]" />
            <StatusRow items={[['Volume', 'text-[#e8e8e8]'], ['69,872', GRAY]]} />
            <Plot box={V3} className="h-[87px]" rows={[915, 944]} cols={P3_COLS}>
              <g shapeRendering="crispEdges">
                {MINUTE_VOLUME.split(' ').map((item) => {
                  const [, m, dir, h] = item.match(/(\d+)([grw])(\d+)/)!;
                  return <rect key={m} x={minuteX(+m)} y={971 - +h} width="1" height={h} fill={COLORS[dir]} />;
                })}
                <path d="M61 969h1v2h-1zM74 969h1v2h-1zM77 965h1v6h-1z" fill={GREEN} />
                <path d="M17 970h1v1h-1zM71 970h1v1h-1zM84 969h1v2h-1z" fill={RED} />
              </g>
              <VLine x={227} from={885} to={971} />
            </Plot>
          </div>
          <TimeAxis box={V3} hover={{ at: 228, text: '10:05' }} labels={P3_TIMES} />
          {/* trade notes drawn across both plots */}
          <div className="pointer-events-none absolute inset-x-px top-[21px] h-[430px]">
            <svg viewBox="8 541 1561 430" preserveAspectRatio="none" className="h-full w-full" aria-hidden>
              {ARROWS.map((p, i) => <Arrow key={i} points={p} />)}
            </svg>
            {NOTES.map((n) => (
              <p
                key={n.x}
                style={{ left: `${((n.x - 8) / 1561) * 100}%`, top: n.y - 549 }}
                className="absolute font-['DejaVu_Sans_Condensed','Noto_Sans',sans-serif] text-[13px] leading-4 font-bold whitespace-pre text-[#fb8848]"
              >
                {n.lines.join('\n')}
              </p>
            ))}
          </div>
        </div>
        <div className="relative w-[61px] shrink-0">
          <div className="flex h-[21px] items-center pl-1"><CurveArrowsIcon /></div>
          <Scale
            side="right"
            from={541}
            className="h-80"
            labels={[
              { at: 548, text: '45.92', tone: 'gray' },
              { at: 572, text: '45.5' },
              { at: 599, text: '45' },
              { at: 626, text: '44.5' },
              { at: 654, text: '44' },
              { at: 681, text: '43.5' },
              { at: 708, text: '43' },
              { at: 735, text: '42.5' },
              { at: 762, text: '42' },
              { at: 790, text: '41.5' },
              { at: 817, text: '41' },
              { at: 844, text: '40.5' },
              { at: 839, text: '40.55', tone: 'red' },
            ]}
          />
          <Scale
            side="right"
            from={885}
            className="mt-6 h-[87px]"
            labels={[{ at: 888, text: '150' }, { at: 916, text: '100' }, { at: 945, text: '50' }, { at: 972, text: '0' }]}
          />
          <Units className="right-0.5 bottom-8" text="<thousands>" />
        </div>
      </div>
      <ScrollRow
        grow="flex-1"
        thumb="w-[446px]"
        rest="w-28"
        end="pr-0.5"
        gap={
          <span className="ml-[66px] flex h-[13px] w-[31px] items-start justify-center bg-[#4c4c4c] pt-1">
            <span className="h-2 w-2 bg-white" />
          </span>
        }
      />
    </section>
  );
}

/* ---------- shell ---------- */

const MENU = ['Monitor', 'Trade', 'Analyze', 'Scan', 'MarketWatch', 'Charts', 'Tools', 'Education', 'Help'];

export default function App() {
  return (
    <div className="h-screen overflow-hidden border-l-[3px] border-[#2e2e2e] bg-[#0a0a0a] pl-[2px] font-['Noto_Sans','Open_Sans',sans-serif] text-[11px] leading-[14px]">
      <div className="h-[3px] bg-[#161616]" />
      <nav className="flex h-[21px] overflow-hidden bg-[#323232] text-[#cccccc]">
        {MENU.map((m) => (
          <button key={m} type="button" className={clsx('shrink-0 border-r border-[#484848] px-[9px] pb-0.5', m === 'Charts' && 'bg-[#5a5a5a]')}>
            {m}
          </button>
        ))}
        <button type="button" className="ml-auto flex w-[86px] shrink-0 items-center gap-1 overflow-hidden border-l border-[#484848] pb-0.5 pl-2.5 whitespace-nowrap">
          <svg viewBox="0 0 20 16" className="h-4 w-[18px] shrink-0" fill="none" stroke="#e0e0e0" aria-hidden>
            <circle cx="12.5" cy="8.5" r="6.5" strokeDasharray="2 1.2" />
            <path d="M12.5 4.5v4H16" strokeWidth="1.3" />
            <path d="M0 8h3C3.5 4 7 1 11 1 8 3 7.5 5.5 7.5 8H10L5 15z" fill="#e0e0e0" stroke="none" />
          </svg>
          OnDemand
        </button>
      </nav>
      <div className="flex h-[21px] items-center overflow-hidden bg-[#484848] pb-px text-[#cccccc]">
        <button type="button" className="ml-[3px] flex h-4 w-[65px] shrink-0 items-center gap-[5px] rounded bg-[#0c0c0c] pl-2">
          <svg viewBox="0 0 13 13" className="h-[13px] w-[13px]" fill="#b03434" aria-hidden>
            <path d="M0 10h2v3H0zM3 8h2v5H3zM6 5h2v8H6zM9 2h1.5v11H9zM11 0h2v13h-2z" />
          </svg>
          Charts
        </button>
        <button type="button" className="ml-[3px] flex h-full w-[104px] shrink-0 items-center gap-[5px] border-l border-[#5c5c5c] pl-2.5">
          <svg viewBox="0 0 14 14" className="h-3.5 w-3.5" fill="#6cb8e4" aria-hidden>
            <path d="M0 0h6v8H0zM7.5 0H14v4H7.5zM0 9.5h6V14H0zM7.5 5.5H14V14H7.5z" />
          </svg>
          Flexible Grid
        </button>
        <button type="button" className="flex h-full w-[116px] shrink-0 items-center gap-[5px] border-x border-[#5c5c5c] pl-2.5">
          <svg viewBox="0 0 14 14" className="h-3.5 w-3.5" aria-hidden>
            <path d="M0 0h14v14H0z" fill="#1c80b0" />
            <path d="M2 3.5h10M2 11.5h10M2 8l3-2 3 2 4-2.5M2 10l3-1.5 3 1 4-1.5" fill="none" stroke="#103c58" strokeWidth="1.2" />
          </svg>
          Product Depth
        </button>
        <button type="button" aria-label="Grid layout" className="relative ml-auto flex h-full w-[58px] shrink-0 items-center border-l border-[#5c5c5c] pl-2.5">
          <svg viewBox="0 0 23 15" className="h-[15px] w-[23px]" fill="none" stroke="#b8b8b8" aria-hidden>
            <path d="M.5.5h22v14H.5zM11.5 0v15M0 7.5h23" />
          </svg>
          <Corner />
        </button>
        <button type="button" aria-label="Layout menu" className="flex h-full w-[18px] shrink-0 items-center overflow-hidden border-l border-[#5c5c5c] pl-2">
          <span className="w-2 shrink-0 overflow-hidden"><ListIcon /></span>
        </button>
      </div>
      <main>
        <div className="grid grid-cols-[1115fr_5px_508fr]">
          <IntradayPanel />
          <div className="mx-px border-x border-[#3c3c3c] bg-[#0a0a0a]" />
          <DailyPanel />
        </div>
        <div className="mt-1 mb-px h-[3px] border-y border-[#4a4a4a]" />
        <MinutePanel />
      </main>
    </div>
  );
}
